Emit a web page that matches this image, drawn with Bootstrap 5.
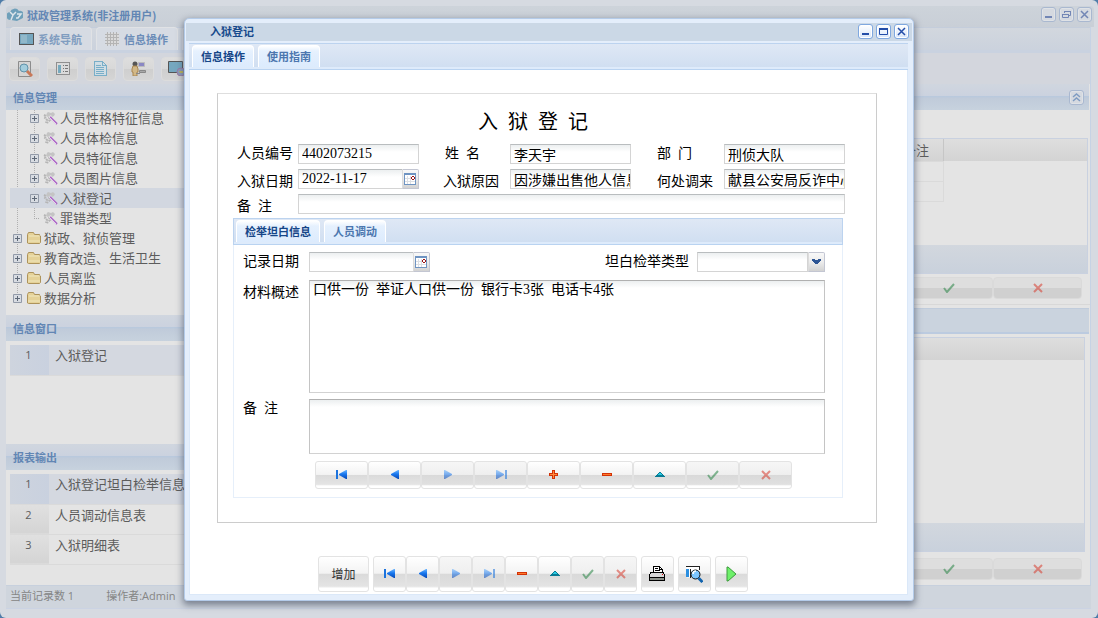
<!DOCTYPE html>
<html lang="zh-CN">
<head>
<meta charset="utf-8">
<meta name="viewport" content="width=device-width, initial-scale=1">
<title>狱政管理系统</title>
<link rel="stylesheet" href="https://cdn.jsdelivr.net/npm/bootstrap@5.3.0/dist/css/bootstrap.min.css">
<style>
  html, body { height: 100%; }
  body { background: #4f7ca8; font-family: "Open Sans", "Noto Sans CJK SC", sans-serif; font-size: 13px; line-height: 20px; color: #5c5c5c; overflow: hidden; }
  svg { display: block; flex: none; }
  a { color: inherit; text-decoration: none; }
  .bar-text { font: bold 11px/16px "Noto Sans CJK SC", sans-serif; }

  /* main window */
  .app { min-height: 100vh; background: #d6dae1; border-radius: 6px; padding: 6px 7px 0 6px; }
  .app-title { height: 21px; background: linear-gradient(#cdd3da, #c9cfd7); color: #6286b4; padding: 0 0 4px 1px; margin-right: -3px; border-radius: 4px 4px 0 0; }
  .app-ctls { gap: 3px; color: #7286b5; margin-right: 2px; }
  .app-foot { height: 10px; border-top: 1px solid #cbd3e3; }
  .app-main { border-right: 1px solid #c6d2e4; background: #e4e4e4; }
  .side { width: 200px; flex: none; }
  .strip { height: 26px; background: linear-gradient(#d2d7de, #cbd2dd); border-top: 1px solid #c4cddb; border-bottom: 3px solid #c9d2e0; }
  .strip-tab { height: 23px; width: 82px; flex: none; color: #809dc0; background: #d6dbe3; border: 1px solid #e0e2e5; border-bottom: 0; border-radius: 4px 4px 0 0; white-space: nowrap; }
  .strip-tab.live { color: #6c8db8; }
  .strip-tab.rest { width: 20px; }
  .tools { height: 31px; background: #d3d6dd; padding-left: 3px; gap: 7px; }
  .tool-tile { width: 31px; height: 24px; background: linear-gradient(#dedede, #d8d8d8 50%, #cfcfcf 52%, #d5d5d5); border: 1px solid #dcdcdc; flex: none; }
  .panel-head { height: 26px; color: #6286b4; background: linear-gradient(#d0d6df, #cbd2df 46%, #b9c9dd 48%, #c0cbda 55%, #c7d2de); padding-left: 7px; flex: none; }
  .main-head { margin-right: 1px; padding-right: 5px; }
  .tree { height: 205px; overflow: hidden; }
  .tree ul { margin-top: -2px; background: repeating-linear-gradient(#b0b0b0 0 1px, transparent 1px 2px) 11px 0 / 1px 188px no-repeat, repeating-linear-gradient(#b0b0b0 0 1px, transparent 1px 2px) 28px 0 / 1px 110px no-repeat; }
  .tree li { height: 20px; margin-left: 4px; white-space: nowrap; padding-left: 3px; }
  .tree li.kid { padding-left: 20px; }
  .tree li.sel { background: #d2d7e0; }
  .tree li a { margin-left: 2px; }
  .pane-list { padding: 4px 0 0 4px; height: 103px; }
  .pane-list table { width: 100%; border-collapse: collapse; }
  .pane-list td { height: 30px; padding: 0 0 9px 6px; border-bottom: 1px solid #dadada; white-space: nowrap; line-height: 20px; }
  .pane-list td:first-child { width: 39px; padding: 0 2px 9px 0; text-align: center; font-size: 11px; background: linear-gradient(#e0e0e0, #d4d4d4); }
  .pane-list tr.sel td { background: #d4d8e0; }
  .pane-list tr.sel td:first-child { background: linear-gradient(90deg, #ced4de, #c9d1df); }
  .status { height: 23px; background: #cfd5dd; border-top: 1px solid #c7d0dd; color: #858585; font: 11px/20px "Open Sans", "Noto Sans CJK SC", sans-serif; padding-left: 4px; }
  .operator { margin-left: 32px; }
  .grid-box { border: 1px solid #c9d1e0; }
  .grid-head { height: 22px; background: linear-gradient(#dedede, #d3d3d3); }
  .grid-box table { width: 737px; }
  .grid-box th, .grid-box td { border: 1px solid #dadada; border-width: 0 1px 1px 0; padding: 0 14px 0 0; height: 20px; font-weight: 400; text-align: right; font-size: 13px; }
  .grid-box th { height: 22px; border-right-color: #c6c6c6; }
  .grid-foot { height: 28px; background: linear-gradient(#d2d7de, #c9d1dc); }
  .top-box { margin: 28px 2px 0 0; }
  .grid-space { height: 84px; }
  .dim-btn { width: 89px; height: 22px; background: linear-gradient(#dedede 50%, #d0d0d0 52%); border: 1px solid #dadada; }
  .dim-row { padding: 3px 8px 5px 0; border-bottom: 1px solid #d8d8d8; }
  .mid-head { height: 26px; margin: 3px 1px 0 0; background: #cad3de; border-top: 1px solid #c0ccdc; border-bottom: 2px solid #bccbe0; flex: none; }
  .low-box { margin: 3px 5px 0 0; }
  .low-row { padding: 6px 8px 5px 0; border: 0; }
  .fade-ico { opacity: .55; }

  /* window control squares */
  .ctl { width: 15px; height: 15px; color: inherit; border: 1px solid #7fa8e0; border-radius: 3px; background: linear-gradient(#fff, #d8e6fa); box-shadow: inset 0 0 0 1px #fff; flex: none; }
  .ctl.dim { border-color: #a9b8d0; background: #d5d9e0; box-shadow: inset 0 0 0 1px #dfe2e6; }

  /* dialog */
  .layer { position: absolute; inset: 0; padding: 18px 184px 17px; }
  .dlg { background: #e4eefb; border: 1px solid #b4cbe9; border-radius: 5px 5px 3px 3px; box-shadow: 0 3px 7px 1px rgba(60,70,90,.6); padding: 4px 5px 5px 4px; }
  .dlg-title { height: 18px; background: #cbd8e6; color: #174a8c; padding: 0 3px 2px 24px; margin: 0 -4px 2px -3px; }
  .dlg-ctls { gap: 3px; color: #234da8; }
  .dlg-body { background: #fff; border: 1px solid #dbe8f8; border-top: 0; }
  .tabline { height: 27px; background: linear-gradient(#dfe8f5, #cfdef1); border-top: 1px solid #bcd3ef; border-bottom: 1px solid #b9d3f1; box-shadow: inset 0 -2px #deebfb; padding: 1px 3px 3px; gap: 4px; }
  .tabline .nav-link { font: bold 11px/16px "Noto Sans CJK SC", sans-serif; color: #4c77af; padding: 2px 8px 0; border: 1px solid #fff; border-width: 1px 1px 0; border-radius: 4px 4px 0 0; background: linear-gradient(#fff, #e6f1fe 5px, #dcebfd); height: 22px; }
  .tabline .nav-link.active { color: #164688; }
  .sheet { border: 1px solid #ccc; border-top-color: #dedede; margin: 23px 30px 0 27px; height: 430px; flex: none; color: #000; font-family: "Liberation Serif", "Noto Sans CJK SC", sans-serif; font-size: 14px; }
  .sheet h1 { font-size: 20px; line-height: 26px; margin: 15px 28px 9px 0; font-weight: 400; font-family: inherit; }
  .sheet label { white-space: nowrap; line-height: 20px; }
  .head-grid { display: grid; grid-template-columns: 61px 1fr 91px 1fr 93px 1fr; row-gap: 5px; grid-auto-rows: 20px; margin: 0 31px 0 19px; }
  .head-grid label.mid { padding-left: 26px; }
  .head-grid label.near { padding-left: 24px; }
  .sheet label.low { padding-top: 3px; }
  .wide { grid-column: 2 / -1; }
  .fld { min-height: 0; height: 20px; border: 1px solid #d4d4d4; border-top-color: #b9bdbf; border-radius: 0; padding: 0 3px; font: 14px/18px "Liberation Serif", "Noto Sans CJK SC", sans-serif; color: #000; background: linear-gradient(#eceff0, #fff 7px); box-shadow: none; min-width: 0; }
  .head-grid > .fld { padding-right: 0; }
  .fld:focus { box-shadow: none; }
  select.fld { appearance: none; }
  .trig { width: 17px; height: 20px; border: 1px solid #c3c6d2; border-left-color: #dcdcdc; border-radius: 0 2px 0 0; background: linear-gradient(#f8f8f8, #ececec 50%, #d2d2d2); padding: 0; flex: none; }
  .fld.big { resize: none; overflow: hidden; border-color: #b0b0b0 #c4c4c4 #d2d2d2 #c4c4c4; display: block; }
  .material { height: 113px; }
  .remark { height: 55px; }
  .sub { border: 1px solid #e6effa; border-width: 0 1px 1px; margin: 4px 33px 0 15px; height: 280px; }
  .sub .tabline { margin: 0 -1px; border-left: 1px solid #bcd3ef; border-right: 1px solid #bcd3ef; padding-left: 2px; }
  .sub-grid { display: grid; grid-template-columns: 66px 1fr; row-gap: 6px; padding: 7px 17px 0 9px; }
  .first-row { padding-bottom: 2px; }
  .date-sub { width: 121px; }
  .kind { width: 128px; }
  .nav-btn { height: 28px; width: 53px; border: 1px solid #e3e3e3; border-radius: 3px; padding: 0; background: linear-gradient(#fff, #f3f3f3 48%, #dadada 50%, #e4e4e4 86%, #fff 92%); }
  .nav-btn:disabled { background: linear-gradient(#f6f6f6, #efefef 48%, #d9d9d9 50%, #e0e0e0 86%, #fff 92%); border-color: #e3e3e3; opacity: 1; }
  .nav-btn:disabled svg { opacity: .55; }
  .subtools { padding: 7px 0 0 81px; }
  .cmds { padding: 33px 0 0 128px; }
  .cmds .nav-btn { height: 36px; width: 33px; flex: none; color: #333; font: 12px/16px "Noto Sans CJK SC", sans-serif; }
  .cmds .nav-btn.word { width: 51px; }
</style>
</head>
<body>
<svg width="0" height="0" class="position-absolute" shape-rendering="crispEdges">
  <linearGradient id="blue" x1="0" y1="0" x2="0" y2="1"><stop offset="0" stop-color="#6bb5ff"/><stop offset=".45" stop-color="#1a79ef"/><stop offset="1" stop-color="#0648b8"/></linearGradient>
  <symbol id="i-first" viewBox="0 0 12 10"><path d="M0 0h2v9H0z" fill="#1c73dd"/><path d="M11 0v9h-1L3 5V4l7-4z" fill="url(#blue)"/></symbol>
  <symbol id="i-prev" viewBox="0 0 12 10"><path d="M10 0v9H9L2 5V4l7-4z" fill="url(#blue)"/></symbol>
  <symbol id="i-next" viewBox="0 0 12 10"><path d="M2 0v9h1l7-4V4L3 0z" fill="url(#blue)"/></symbol>
  <symbol id="i-last" viewBox="0 0 12 10"><path d="M1 0v9h1l7-4V4L2 0z" fill="url(#blue)"/><path d="M10 0h2v9h-2z" fill="#1c73dd"/></symbol>
  <symbol id="i-plus" viewBox="0 0 12 10"><path d="M4 0h3v3h3v3H7v3H4V6H1V3h3z" fill="#d33206"/><path d="M5 1h1v3h3v1H6v3H5V5H2V4h3z" fill="#ff8a3b"/></symbol>
  <symbol id="i-minus" viewBox="0 0 12 10"><path d="M1 3h10v3H1z" fill="#d33206"/><path d="M2 4h8v1H2z" fill="#ff7a2b"/></symbol>
  <symbol id="i-up" viewBox="0 0 12 10"><path d="M5 2h2v1h1v1h1v1h1v1h1v1H1V6h1V5h1V4h1V3h1z" fill="#087b94"/><path d="M5 3h2v1h1v1H4V4h1z" fill="#29cae2"/></symbol>
  <symbol id="i-ok" viewBox="0 0 12 10"><path d="M1 5l3 4 7-8" fill="none" stroke="#268443" stroke-width="2"/></symbol>
  <symbol id="i-no" viewBox="0 0 12 10"><path d="M2 1l8 8M10 1l-8 8" fill="none" stroke="#d83a2c" stroke-width="2"/></symbol>
  <symbol id="i-cal" viewBox="0 0 13 13"><path d="M.5.5h11v11H.5z" fill="#fff" stroke="#6f94c2"/><path d="M0 0h12v2H0z" fill="#6f94c2"/><path d="M1 5.500h10M1 8.500h10M3.500 3v8M6.500 3v8" stroke="#dcdfe4" fill="none"/><path d="M8 3h2v1h1v2h-1v1H8V6H7V4h1z" fill="#9b1515"/><path d="M8 4h2v2H8z" fill="#fff"/></symbol>
  <symbol id="i-exp" viewBox="0 0 9 9"><path d="M.5.5h8v8h-8z" fill="#d8dce2" stroke="#929aa8"/><path d="M2 4.500h5M4.500 2v5" stroke="#5d6776"/></symbol>
  <symbol id="i-gear" viewBox="0 0 15 14"><path d="M5 1l3 1 2-1 2 2-1 2-2 1-1-2-3 2-2-1 1-3z" fill="#c4c4c4"/><path d="M1 4l2 1-1 2 2 2-1 3M6 6l1 3-3 3" stroke="#b5b5b5" stroke-width="2" fill="none" stroke-dasharray="2 1"/><path d="M7 6l7 7" stroke="#ad69c8" stroke-width="2"/><path d="M6 6l7 7" stroke="#e5d3ea"/></symbol>
  <symbol id="i-fold" viewBox="0 0 16 14"><path d="M1.500 12V3.500l1-2h5l1 2h5V5h1v6.500l-1 1h-11z" fill="#e5d298" stroke="#ad935b"/><path d="M3 5h11M2 10h12" stroke="#efe6bd"/></symbol>
  <symbol id="c-min" viewBox="0 0 13 13"><path d="M3 8h7v2H3z" fill="currentColor"/></symbol>
  <symbol id="c-max" viewBox="0 0 13 13"><path d="M2.500 3.500h8v6h-8z" fill="none" stroke="currentColor"/><path d="M2 3h9v2H2z" fill="currentColor"/></symbol>
  <symbol id="c-res" viewBox="0 0 13 13"><path d="M4.500 5V3.500h6v4H9M2.500 6.500h6v3h-6z" fill="none" stroke="currentColor"/><path d="M4 3h7v1H4zM2 6h7v1H2z" fill="currentColor"/></symbol>
  <symbol id="c-cls" viewBox="0 0 13 13"><path d="M3 3l7 7M10 3l-7 7" fill="none" stroke="currentColor" stroke-width="1.500"/></symbol>
</svg>

<div class="app d-flex flex-column">
  <header class="app-title d-flex align-items-center flex-shrink-0 bar-text">
    <svg width="16" height="14" viewBox="0 0 16 14"><path d="M4 12a4 4 0 0 1-1-8 5 5 0 0 1 9-1 4 4 0 0 1 2 8l-4 2z" fill="#6fa0ba"/><path d="M3 4l3 3 3-3M6 7l-2 5M10 6h4l-3 4h-2" stroke="#dde6eb" stroke-width="1.500" fill="none"/></svg>
    <span class="ms-1 flex-fill">狱政管理系统(非注册用户)</span>
    <span class="d-flex app-ctls">
      <button class="ctl dim p-0" aria-label="最小化"><svg width="13" height="13"><use href="#c-min"/></svg></button>
      <button class="ctl dim p-0" aria-label="还原"><svg width="13" height="13"><use href="#c-res"/></svg></button>
      <button class="ctl dim p-0" aria-label="关闭"><svg width="13" height="13"><use href="#c-cls"/></svg></button>
    </span>
  </header>

  <div class="app-main d-flex flex-fill">
    <aside class="side d-flex flex-column">
      <nav class="strip d-flex align-items-end gap-1 ps-1 bar-text">
        <a href="#" class="strip-tab d-flex align-items-center gap-1 ps-2"><svg width="15" height="13" shape-rendering="crispEdges"><path d="M.5.5h14v11H.5z" fill="#76a7bf" stroke="#555"/><path d="M2 2h6v8H2z" fill="#91b8ca"/></svg>系统导航</a>
        <a href="#" class="strip-tab live d-flex align-items-center gap-1 ps-2"><svg width="15" height="14" shape-rendering="crispEdges"><path d="M1 1h13v12H1z" fill="#dadada"/><path d="M0 2.500h14M0 5.500h14M0 8.500h14M0 11.500h14M2.500 0v14M5.500 0v14M8.500 0v14M11.500 0v14" stroke="#b4b4b4"/></svg>信息操作</a>
        <span class="strip-tab rest"></span>
      </nav>
      <div class="tools d-flex align-items-center">
        <button class="tool-tile p-0 d-flex align-items-center justify-content-center rounded-1" aria-label="查询"><svg width="16" height="16"><path d="M1.500.5h12v15h-12z" fill="#d5d5d5" stroke="#8c8c8c"/><circle cx="7" cy="7" r="4" fill="#a3cddd" stroke="#6092aa"/><path d="M10 10l5 5" stroke="#c97958" stroke-width="3"/></svg></button>
        <button class="tool-tile p-0 d-flex align-items-center justify-content-center rounded-1" aria-label="列表"><svg width="14" height="13" shape-rendering="crispEdges"><path d="M.5.5h13v12H.5z" fill="#dadada" stroke="#8f8f8f"/><path d="M2 3h3v8H2z" fill="#76a9bd"/><path d="M7 3.500h1M9 3.500h3M7 6.500h1M9 6.500h3M7 9.500h1M9 9.500h3" stroke="#777"/></svg></button>
        <button class="tool-tile p-0 d-flex align-items-center justify-content-center rounded-1" aria-label="文档"><svg width="13" height="15" shape-rendering="crispEdges"><path d="M.5.5h8l4 4v10H.5z" fill="#cfdde4" stroke="#78aec8"/><path d="M2 4.500h5M2 6.500h8M2 8.500h8M2 10.500h8M2 12.500h8M8.500 1v3.500H12" stroke="#78aec8" fill="none"/></svg></button>
        <button class="tool-tile p-0 d-flex align-items-center justify-content-center rounded-1" aria-label="人员"><svg width="16" height="15"><circle cx="4" cy="3" r="2.500" fill="#555"/><path d="M2 5h4l1 3v3H6v4H2v-4H1V8z" fill="#d2b887" stroke="#a98650"/><path d="M7.500 1.500h6v4h-6z" fill="#8a87c4" stroke="#bbb"/><path d="M8.500 9.500h6v2h-6zM5 12.500h4" fill="#a8a8a8" stroke="#888"/></svg></button>
        <button class="tool-tile p-0 d-flex align-items-center justify-content-center rounded-1" aria-label="系统"><svg width="17" height="15"><path d="M.5.5h14v11H.5z" fill="#76a7bf" stroke="#555"/><circle cx="13" cy="11" r="4" fill="#8e9cbb" stroke="#9c7ca6"/><path d="M11 10h4v2h-3z" fill="#c0b858"/></svg></button>
      </div>
      <div class="panel-head d-flex align-items-center bar-text">信息管理</div>
      <div class="tree">
        <ul class="list-unstyled mb-0">
          <li class="kid d-flex align-items-center"><svg width="9" height="9" class="me-1"><use href="#i-exp"/></svg><svg width="15" height="14"><use href="#i-gear"/></svg><a href="#">人员性格特征信息</a></li>
          <li class="kid d-flex align-items-center"><svg width="9" height="9" class="me-1"><use href="#i-exp"/></svg><svg width="15" height="14"><use href="#i-gear"/></svg><a href="#">人员体检信息</a></li>
          <li class="kid d-flex align-items-center"><svg width="9" height="9" class="me-1"><use href="#i-exp"/></svg><svg width="15" height="14"><use href="#i-gear"/></svg><a href="#">人员特征信息</a></li>
          <li class="kid d-flex align-items-center"><svg width="9" height="9" class="me-1"><use href="#i-exp"/></svg><svg width="15" height="14"><use href="#i-gear"/></svg><a href="#">人员图片信息</a></li>
          <li class="kid sel d-flex align-items-center"><svg width="9" height="9" class="me-1"><use href="#i-exp"/></svg><svg width="15" height="14"><use href="#i-gear"/></svg><a href="#">入狱登记</a></li>
          <li class="kid d-flex align-items-center"><svg width="9" height="20" class="me-1"><path d="M4 10.500h5" fill="none" stroke="#aaa" stroke-dasharray="1 1"/></svg><svg width="15" height="14"><use href="#i-gear"/></svg><a href="#">罪错类型</a></li>
          <li class="d-flex align-items-center"><svg width="9" height="9" class="me-1"><use href="#i-exp"/></svg><svg width="16" height="14"><use href="#i-fold"/></svg><a href="#">狱政、狱侦管理</a></li>
          <li class="d-flex align-items-center"><svg width="9" height="9" class="me-1"><use href="#i-exp"/></svg><svg width="16" height="14"><use href="#i-fold"/></svg><a href="#">教育改造、生活卫生</a></li>
          <li class="d-flex align-items-center"><svg width="9" height="9" class="me-1"><use href="#i-exp"/></svg><svg width="16" height="14"><use href="#i-fold"/></svg><a href="#">人员离监</a></li>
          <li class="d-flex align-items-center"><svg width="9" height="9" class="me-1"><use href="#i-exp"/></svg><svg width="16" height="14"><use href="#i-fold"/></svg><a href="#">数据分析</a></li>
        </ul>
      </div>
      <div class="panel-head d-flex align-items-center bar-text">信息窗口</div>
      <div class="pane-list"><table><tr class="sel"><td>1</td><td>入狱登记</td></tr></table></div>
      <div class="panel-head d-flex align-items-center bar-text">报表输出</div>
      <div class="pane-list"><table>
        <tr class="sel"><td>1</td><td>入狱登记坦白检举信息</td></tr>
        <tr><td>2</td><td>人员调动信息表</td></tr>
        <tr><td>3</td><td>入狱明细表</td></tr>
      </table></div>
    </aside>

    <main class="flex-fill d-flex flex-column">
      <div class="strip"></div>
      <div class="tools"></div>
      <div class="panel-head main-head d-flex align-items-center justify-content-end">
        <button class="ctl dim p-0" aria-label="折叠"><svg width="13" height="13"><path d="M3 6l3.500-3L10 6M3 10l3.500-3L10 10" fill="none" stroke="#7f9cc2" stroke-width="1.500"/></svg></button>
      </div>
      <div class="grid-box top-box">
        <div class="grid-head">
          <table>
            <tr><th>备注</th></tr>
            <tr><td></td></tr>
            <tr><td></td></tr>
          </table>
        </div>
        <div class="grid-space"></div>
        <div class="grid-foot"></div>
      </div>
      <div class="d-flex justify-content-end dim-row">
        <button class="dim-btn p-0 rounded-1 d-flex align-items-center justify-content-center" aria-label="保存"><svg width="12" height="10" class="fade-ico"><use href="#i-ok"/></svg></button>
        <button class="dim-btn p-0 rounded-1 d-flex align-items-center justify-content-center" aria-label="取消"><svg width="12" height="10" class="fade-ico"><use href="#i-no"/></svg></button>
      </div>
      <div class="mid-head"></div>
      <div class="grid-box low-box flex-fill d-flex flex-column">
        <div class="grid-head"></div>
        <div class="flex-fill"></div>
        <div class="grid-foot"></div>
      </div>
      <div class="d-flex justify-content-end dim-row low-row">
        <button class="dim-btn p-0 rounded-1 d-flex align-items-center justify-content-center" aria-label="保存"><svg width="12" height="10" class="fade-ico"><use href="#i-ok"/></svg></button>
        <button class="dim-btn p-0 rounded-1 d-flex align-items-center justify-content-center" aria-label="取消"><svg width="12" height="10" class="fade-ico"><use href="#i-no"/></svg></button>
      </div>
    </main>
  </div>
  <footer class="status d-flex flex-shrink-0"><span>当前记录数 1</span><span class="operator">操作者:Admin</span></footer>
  <div class="app-foot flex-shrink-0"></div>
</div>

<div class="layer d-flex">
  <section class="dlg flex-fill d-flex flex-column" role="dialog" aria-label="入狱登记">
    <div class="dlg-title d-flex align-items-center bar-text">
      <span class="flex-fill">入狱登记</span>
      <span class="d-flex dlg-ctls">
        <button class="ctl p-0" aria-label="最小化"><svg width="13" height="13"><use href="#c-min"/></svg></button>
        <button class="ctl p-0" aria-label="最大化"><svg width="13" height="13"><use href="#c-max"/></svg></button>
        <button class="ctl p-0" aria-label="关闭"><svg width="13" height="13"><use href="#c-cls"/></svg></button>
      </span>
    </div>
    <nav class="nav tabline flex-shrink-0"><a class="nav-link active" href="#">信息操作</a><a class="nav-link" href="#">使用指南</a></nav>
    <form class="dlg-body flex-fill d-flex flex-column">
      <div class="sheet">
        <h1 class="text-center">入&nbsp; 狱&nbsp; 登&nbsp; 记</h1>
        <div class="head-grid">
          <label for="f-no">人员编号</label><input id="f-no" class="form-control fld" value="4402073215">
          <label for="f-name" class="mid">姓&nbsp; 名</label><input id="f-name" class="form-control fld" value="李天宇">
          <label for="f-dept" class="mid">部&nbsp; 门</label><input id="f-dept" class="form-control fld" value="刑侦大队">
          <label for="f-date" class="low">入狱日期</label><div class="d-flex"><input id="f-date" class="form-control fld border-end-0" value="2022-11-17"><button type="button" class="trig d-flex align-items-center justify-content-center" aria-label="选择日期"><svg width="13" height="13" shape-rendering="crispEdges"><use href="#i-cal"/></svg></button></div>
          <label for="f-why" class="mid near low">入狱原因</label><input id="f-why" class="form-control fld" value="因涉嫌出售他人信息">
          <label for="f-from" class="mid low">何处调来</label><input id="f-from" class="form-control fld" value="献县公安局反诈中心">
          <label for="f-memo" class="low">备&nbsp; 注</label><input id="f-memo" class="form-control fld wide">
        </div>
        <div class="sub">
          <nav class="nav tabline"><a class="nav-link active" href="#">检举坦白信息</a><a class="nav-link" href="#">人员调动</a></nav>
          <div class="sub-grid">
            <label for="s-date">记录日期</label>
            <div class="d-flex justify-content-between first-row">
              <div class="d-flex date-sub"><input id="s-date" class="form-control fld border-end-0"><button type="button" class="trig d-flex align-items-center justify-content-center" aria-label="选择日期"><svg width="13" height="13" shape-rendering="crispEdges"><use href="#i-cal"/></svg></button></div>
              <div class="d-flex"><label for="s-kind" class="me-2">坦白检举类型</label><div class="d-flex kind"><select id="s-kind" class="form-control fld"><option></option></select><span class="trig d-flex align-items-center justify-content-center"><svg width="9" height="6" shape-rendering="crispEdges"><path d="M0 0h3v1h3V0h3v2H8v1H7v1H6v1H3V4H2V3H1V2H0z" fill="#2d5594"/></svg></span></div></div>
            </div>
            <label for="s-mat" class="low">材料概述</label><textarea id="s-mat" class="form-control fld big material">口供一份  举证人口供一份  银行卡3张  电话卡4张</textarea>
            <label for="s-memo">备&nbsp; 注</label><textarea id="s-memo" class="form-control fld big remark"></textarea>
          </div>
          <div class="d-flex subtools">
            <button type="button" class="btn nav-btn d-flex align-items-center justify-content-center" aria-label="首条"><svg width="12" height="10"><use href="#i-first"/></svg></button>
            <button type="button" class="btn nav-btn d-flex align-items-center justify-content-center" aria-label="上一条"><svg width="12" height="10"><use href="#i-prev"/></svg></button>
            <button type="button" disabled class="btn nav-btn d-flex align-items-center justify-content-center" aria-label="下一条"><svg width="12" height="10"><use href="#i-next"/></svg></button>
            <button type="button" disabled class="btn nav-btn d-flex align-items-center justify-content-center" aria-label="末条"><svg width="12" height="10"><use href="#i-last"/></svg></button>
            <button type="button" class="btn nav-btn d-flex align-items-center justify-content-center" aria-label="新增"><svg width="12" height="10"><use href="#i-plus"/></svg></button>
            <button type="button" class="btn nav-btn d-flex align-items-center justify-content-center" aria-label="删除"><svg width="12" height="10"><use href="#i-minus"/></svg></button>
            <button type="button" class="btn nav-btn d-flex align-items-center justify-content-center" aria-label="编辑"><svg width="12" height="10"><use href="#i-up"/></svg></button>
            <button type="button" disabled class="btn nav-btn d-flex align-items-center justify-content-center" aria-label="保存"><svg width="12" height="10"><use href="#i-ok"/></svg></button>
            <button type="button" disabled class="btn nav-btn d-flex align-items-center justify-content-center" aria-label="取消"><svg width="12" height="10"><use href="#i-no"/></svg></button>
          </div>
        </div>
      </div>
      <div class="cmds d-flex gap-1">
        <button type="button" class="btn nav-btn word">增加</button>
        <div class="d-flex">
          <button type="button" class="btn nav-btn d-flex align-items-center justify-content-center" aria-label="首条"><svg width="12" height="10"><use href="#i-first"/></svg></button>
          <button type="button" class="btn nav-btn d-flex align-items-center justify-content-center" aria-label="上一条"><svg width="12" height="10"><use href="#i-prev"/></svg></button>
          <button type="button" disabled class="btn nav-btn d-flex align-items-center justify-content-center" aria-label="下一条"><svg width="12" height="10"><use href="#i-next"/></svg></button>
          <button type="button" disabled class="btn nav-btn d-flex align-items-center justify-content-center" aria-label="末条"><svg width="12" height="10"><use href="#i-last"/></svg></button>
          <button type="button" class="btn nav-btn d-flex align-items-center justify-content-center" aria-label="删除"><svg width="12" height="10"><use href="#i-minus"/></svg></button>
          <button type="button" class="btn nav-btn d-flex align-items-center justify-content-center" aria-label="编辑"><svg width="12" height="10"><use href="#i-up"/></svg></button>
          <button type="button" disabled class="btn nav-btn d-flex align-items-center justify-content-center" aria-label="保存"><svg width="12" height="10"><use href="#i-ok"/></svg></button>
          <button type="button" disabled class="btn nav-btn d-flex align-items-center justify-content-center" aria-label="取消"><svg width="12" height="10"><use href="#i-no"/></svg></button>
        </div>
        <button type="button" class="btn nav-btn d-flex align-items-center justify-content-center" aria-label="打印"><svg width="17" height="16" shape-rendering="crispEdges"><path d="M4.500 6V.5h6l3 3V6" fill="#fff" stroke="#000"/><path d="M6 2.500h3M6 4.500h5M10.500 1v2.500H13" stroke="#000" fill="none"/><path d="M1.500 6.500h13l1 3v5H.5v-5z" fill="#d6d6d6" stroke="#000"/><path d="M1 12h14v2H1z" fill="#8c918a"/><path d="M0 11.500h16" stroke="#000"/><path d="M13 8h1v1h-1z" fill="#e00"/></svg></button>
        <button type="button" class="btn nav-btn d-flex align-items-center justify-content-center" aria-label="预览"><svg width="17" height="17"><path d="M.5.5h13v11H.5z" fill="#fff"/><path d="M0 .5h14M13.500 0v4" stroke="#222"/><path d="M0 3h3v8H0z" fill="#2c8fe0"/><path d="M4.500 3v9" stroke="#222"/><circle cx="9.500" cy="8.500" r="4.500" fill="#7cc6ff" stroke="#111"/><path d="M7 8a3 3 0 0 1 3-3" stroke="#fff" fill="none" stroke-width="1.500"/><path d="M12.500 12l4 4" stroke="#1163ae" stroke-width="3"/></svg></button>
        <button type="button" class="btn nav-btn d-flex align-items-center justify-content-center" aria-label="执行"><svg width="11" height="16"><path d="M1 1v14h1l8-7-8-7z" fill="#6ef06a" stroke="#3d9a3d"/></svg></button>
      </div>
    </form>
  </section>
</div>
<script src="https://cdn.jsdelivr.net/npm/bootstrap@5.3.0/dist/js/bootstrap.bundle.min.js"></script>
</body>
</html>
